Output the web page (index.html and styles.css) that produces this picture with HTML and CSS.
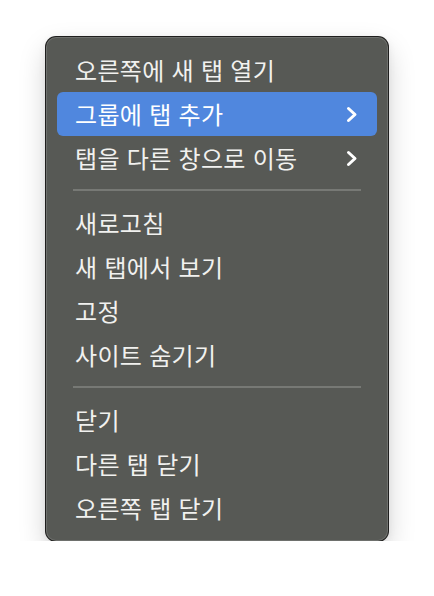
FILE: index.html
```html
<!DOCTYPE html>
<html lang="ko">
<head>
  <meta charset="UTF-8">
  <meta name="viewport" content="width=device-width, initial-scale=1.0">
  <title>탭 메뉴</title>
  <link rel="stylesheet" href="styles.css">
</head>
<body>

  <div class="menu">
    <div class="item">오른쪽에 새 탭 열기</div>
    <div class="item active">
      <span>그룹에 탭 추가</span>
      <svg class="chevron" viewBox="0 0 12 16"><path d="M2.5 2 L9 8 L2.5 14"/></svg>
    </div>
    <div class="item">
      <span>탭을 다른 창으로 이동</span>
      <svg class="chevron" viewBox="0 0 12 16"><path d="M2.5 2 L9 8 L2.5 14"/></svg>
    </div>

    <div class="separator"></div>

    <div class="item">새로고침</div>
    <div class="item">새 탭에서 보기</div>
    <div class="item">고정</div>
    <div class="item">사이트 숨기기</div>

    <div class="separator"></div>

    <div class="item">닫기</div>
    <div class="item">다른 탭 닫기</div>
    <div class="item">오른쪽 탭 닫기</div>
  </div>

</body>
</html>
```

FILE: styles.css
```css
body {
  background-color: #ffffff;
  font-family: "Noto Sans CJK KR", "Noto Sans", sans-serif;
  margin: 0;
  padding: 0;
}

.menu {
  box-sizing: border-box;
  width: 342px;
  margin: 37px 0 0 46px;
  padding: 11px;
  background-color: #575955;
  border-radius: 10px;
  box-shadow:
    0 0 0 1px #1f1f1e,
    inset 0 0 0 1px rgba(255, 255, 255, 0.14),
    0 12px 28px rgba(0, 0, 0, 0.18),
    0 2px 8px rgba(0, 0, 0, 0.08);
}

.item {
  display: flex;
  align-items: center;
  justify-content: space-between;
  height: 44px;
  padding: 0 19px 0 18px;
  border-radius: 6px;
  color: #f1f1ef;
  font-size: 24px;
  font-weight: 400;
  letter-spacing: 0.3px;
  line-height: 1;
}

.item.active {
  background-color: #5087de;
  color: #ffffff;
}

.chevron {
  width: 12px;
  height: 17px;
  fill: none;
  stroke: #ffffff;
  stroke-width: 3;
  stroke-linecap: round;
  stroke-linejoin: round;
}

.separator {
  height: 2px;
  margin: 9px 16px 10px;
  background-color: #777975;
}
```
